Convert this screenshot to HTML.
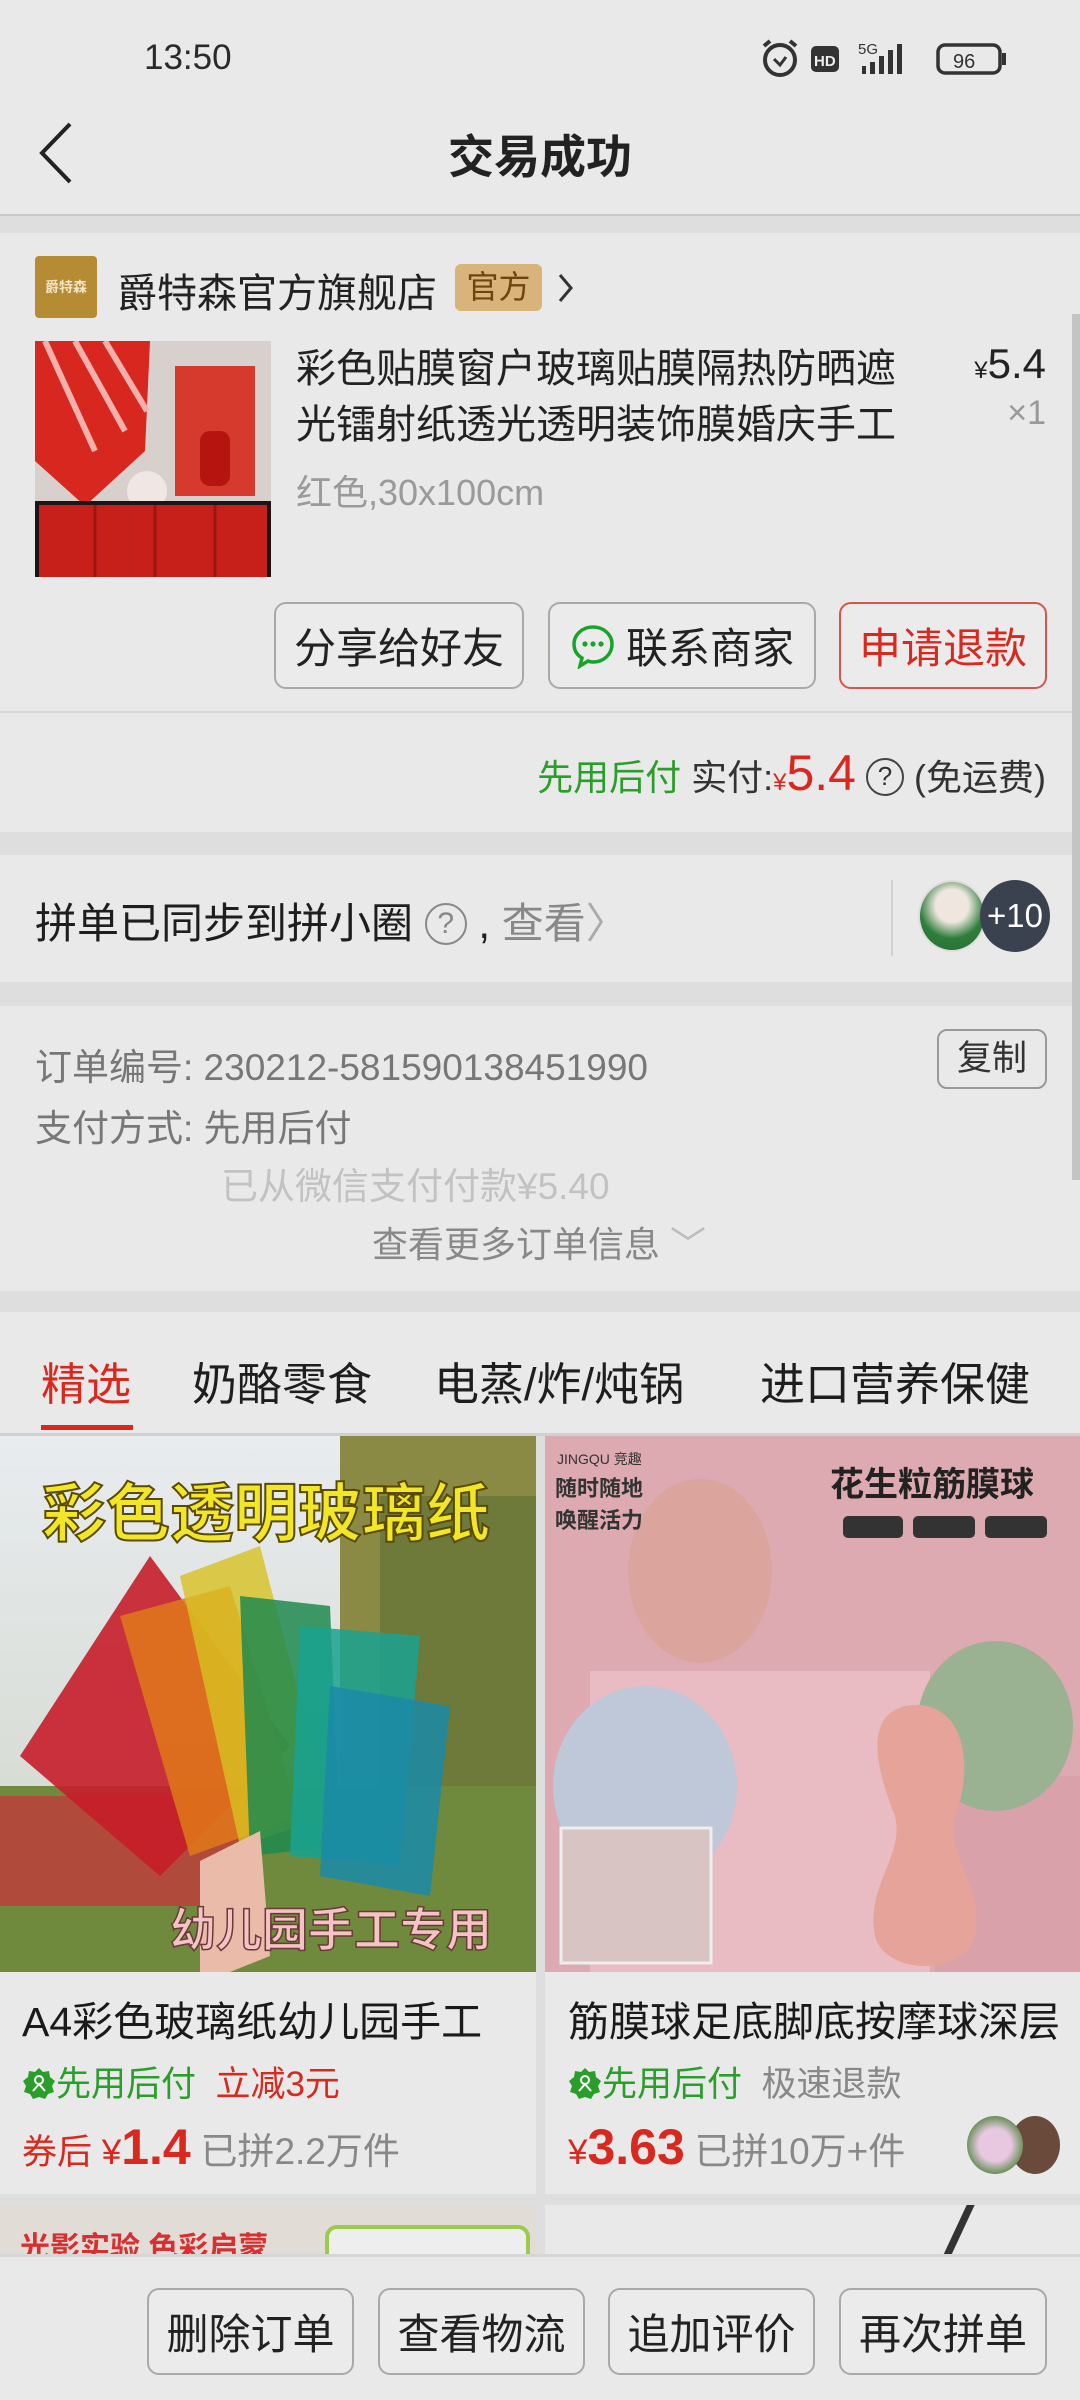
<!DOCTYPE html>
<html><head><meta charset="utf-8"><style>
*{margin:0;padding:0;box-sizing:border-box}
body{width:1080px;height:2400px;background:#dedede;font-family:"Liberation Sans","Noto Sans CJK SC",sans-serif;position:relative;overflow:hidden;color:#1e1e1e}
.a{position:absolute;white-space:nowrap}
.sec{position:absolute;left:0;width:1080px;background:#e9e9e9}
.btn{position:absolute;border:2px solid #a9a9a9;border-radius:12px;font-size:42px;display:flex;align-items:center;justify-content:center;color:#222;background:#ebebeb}
</style></head><body>
<div class="sec" style="top:0;height:216px;background:#e9e9e9;border-bottom:2px solid #c8c8c8"></div>
<div class="a" style="left:144px;top:38px;font-size:35px;color:#2a2a2a">13:50</div>
<svg class="a" style="left:758px;top:38px" width="250" height="42" viewBox="0 0 250 42">
<circle cx="22" cy="22" r="15" fill="none" stroke="#333" stroke-width="4"/><path d="M16 21 l6 6 l6 -8" fill="none" stroke="#333" stroke-width="3"/><path d="M6 8 l6 -5 M38 8 l-6 -5" stroke="#333" stroke-width="4"/>
<rect x="53" y="8" width="28" height="26" rx="5" fill="#333"/><text x="56" y="28" font-size="15" font-weight="bold" fill="#eee" font-family="Liberation Sans">HD</text>
<text x="100" y="16" font-size="15" fill="#333" font-family="Liberation Sans">5G</text>
<rect x="104" y="28" width="4" height="8" fill="#333"/><rect x="112" y="24" width="5" height="12" fill="#333"/><rect x="121" y="18" width="5" height="18" fill="#333"/><rect x="130" y="12" width="5" height="24" fill="#333"/><rect x="139" y="6" width="5" height="30" fill="#333"/>
<rect x="180" y="7" width="62" height="28" rx="7" fill="none" stroke="#333" stroke-width="3.5"/><rect x="244" y="15" width="4" height="12" fill="#333"/>
<text x="195" y="30" font-size="20" fill="#333" font-family="Liberation Sans">96</text>
</svg>
<svg class="a" style="left:36px;top:120px" width="40" height="66"><path d="M34 4 L6 33 L34 62" fill="none" stroke="#222" stroke-width="4"/></svg>
<div class="a" style="left:0;width:1080px;text-align:center;top:121px;font-size:46px;font-weight:bold;color:#222">交易成功</div>

<div class="sec" style="top:233px;height:599px"></div>
<div class="a" style="left:35px;top:256px;width:62px;height:62px;background:#b58c34;border-radius:4px;color:#f3e4c4;font-size:14px;font-weight:bold;display:flex;align-items:center;justify-content:center">爵特森</div>
<div class="a" style="left:117px;top:261px;font-size:40px;color:#222">爵特森官方旗舰店</div>
<div class="a" style="left:455px;top:264px;width:87px;height:47px;background:#d9b47a;border-radius:6px;font-size:32px;color:#6e4410;text-align:center;line-height:47px">官方</div>
<svg class="a" style="left:556px;top:272px" width="20" height="32"><path d="M4 3 L15 16 L4 29" fill="none" stroke="#333" stroke-width="3"/></svg>
<svg class="a" style="left:35px;top:341px" width="236" height="236" viewBox="0 0 236 236">
<rect width="236" height="236" fill="#d8d0cc"/>
<path d="M0 0 L115 0 L110 110 L50 165 L0 120Z" fill="#d8271e"/><path d="M10 0 L60 110 M40 0 L90 90 M70 0 L112 70" stroke="#f4b0aa" stroke-width="6"/>
<rect x="140" y="25" width="80" height="130" fill="#d63a2c"/><rect x="165" y="90" width="30" height="55" rx="10" fill="#b5140f"/>
<circle cx="112" cy="150" r="20" fill="#f0e6e4"/>
<rect x="0" y="160" width="236" height="76" fill="#1c1416"/><rect x="4" y="164" width="228" height="72" fill="#c7201a"/>
<path d="M60 164 V236 M120 164 V236 M180 164 V236" stroke="#9e1510" stroke-width="3"/>
</svg>
<div class="a" style="left:296px;top:341px;font-size:40px;line-height:56px;color:#222">彩色贴膜窗户玻璃贴膜隔热防晒遮<br>光镭射纸透光透明装饰膜婚庆手工</div>
<div class="a" style="right:34px;top:340px;font-size:42px;color:#222"><span style="font-size:24px">¥</span>5.4</div>
<div class="a" style="right:34px;top:394px;font-size:34px;color:#999">×1</div>
<div class="a" style="left:296px;top:464px;font-size:36px;color:#9a9a9a">红色,30x100cm</div>
<div class="btn" style="left:274px;top:602px;width:250px;height:87px">分享给好友</div>
<div class="btn" style="left:548px;top:602px;width:268px;height:87px"><svg width="46" height="46" viewBox="0 0 46 46" style="margin-right:10px"><path d="M23 4 C12 4 4 12 4 21 C4 27 7 32 12 35 L10 43 L18 38 C20 39 21 39 23 39 C34 39 42 31 42 21 C42 12 34 4 23 4Z" fill="none" stroke="#1aa32a" stroke-width="3.5"/><circle cx="15" cy="21" r="2.6" fill="#1aa32a"/><circle cx="23" cy="21" r="2.6" fill="#1aa32a"/><circle cx="31" cy="21" r="2.6" fill="#1aa32a"/></svg>联系商家</div>
<div class="btn" style="left:839px;top:602px;width:208px;height:87px;border-color:#d9534f;color:#d9281e">申请退款</div>
<div class="a" style="left:0;top:711px;width:1080px;height:2px;background:#d6d6d6"></div>
<div class="a" style="right:34px;top:744px;font-size:36px;color:#333"><span style="color:#2a9e2a">先用后付</span> 实付:<span style="color:#d9281e;font-size:24px">¥</span><span style="color:#d9281e;font-size:50px">5.4</span> <span style="display:inline-block;width:38px;height:38px;border:2.5px solid #444;border-radius:50%;font-size:26px;text-align:center;line-height:33px;vertical-align:5px">?</span> (免运费)</div>

<div class="sec" style="top:855px;height:127px"></div>
<div class="a" style="left:35px;top:890px;font-size:42px;color:#1e1e1e">拼单已同步到拼小圈 <span style="display:inline-block;width:42px;height:42px;border:2.5px solid #888;border-radius:50%;font-size:30px;color:#888;text-align:center;line-height:37px;vertical-align:5px">?</span> , <span style="color:#888">查看</span><span style="color:#aaa">〉</span></div>
<div class="a" style="left:891px;top:880px;width:2px;height:76px;background:#d0d0d0"></div>
<div class="a" style="left:918px;top:880px;width:68px;height:72px;border-radius:50%;background:radial-gradient(circle at 50% 35%,#efe6e0 30%,#2e7d3a 60%,#2a6a36);border:2px solid #ddd"></div>
<div class="a" style="left:980px;top:880px;width:70px;height:72px;border-radius:50%;background:#3a4250;color:#fff;font-size:33px;text-align:center;line-height:72px">+10</div>

<div class="sec" style="top:1006px;height:285px"></div>
<div class="a" style="left:35px;top:1037px;font-size:37px;color:#777">订单编号: 230212-581590138451990</div>
<div class="a" style="left:937px;top:1029px;width:110px;height:60px;border:2px solid #999;border-radius:10px;font-size:35px;text-align:center;line-height:56px;color:#333">复制</div>
<div class="a" style="left:35px;top:1098px;font-size:37px;color:#777">支付方式: 先用后付</div>
<div class="a" style="left:221px;top:1156px;font-size:37px;color:#c2c2c2">已从微信支付付款¥5.40</div>
<div class="a" style="left:372px;top:1216px;font-size:36px;color:#888">查看更多订单信息 <span style="color:#bbb">﹀</span></div>

<div class="sec" style="top:1312px;height:123px"></div>
<div class="a" style="left:41px;top:1348px;font-size:45px;color:#d9281e">精选</div>
<div class="a" style="left:192px;top:1348px;font-size:45px">奶酪零食</div>
<div class="a" style="left:434px;top:1348px;font-size:45px">电蒸/炸/炖锅</div>
<div class="a" style="left:760px;top:1348px;font-size:45px">进口营养保健</div>
<div class="a" style="left:41px;top:1425px;width:92px;height:5px;background:#d9281e"></div>
<div class="a" style="left:0;top:1433px;width:1080px;height:3px;background:#d0d0d0"></div>

<div class="a" style="left:0;top:1436px;width:536px;height:758px;background:#e9e9e9"></div>
<div class="a" style="left:545px;top:1436px;width:535px;height:758px;background:#e9e9e9"></div>
<svg class="a" style="left:0;top:1436px" width="536" height="536" viewBox="0 0 536 536">
<defs><linearGradient id="sky" x1="0" y1="0" x2="0" y2="1"><stop offset="0" stop-color="#e8ecef"/><stop offset="1" stop-color="#cfd4c8"/></linearGradient></defs>
<rect width="536" height="536" fill="url(#sky)"/>
<rect x="340" y="0" width="196" height="380" fill="#8a8a45"/><rect x="380" y="60" width="156" height="340" fill="#6d7a3a"/>
<rect x="0" y="350" width="536" height="186" fill="#6f8a3c"/><rect x="0" y="360" width="260" height="110" fill="#b04a3a"/>
<path d="M20 320 L150 120 L290 310 L160 440Z" fill="#c71d2a" opacity=".9"/>
<path d="M120 180 L230 150 L300 380 L190 420Z" fill="#e0781a" opacity=".85"/>
<path d="M180 140 L260 110 L330 380 L240 410Z" fill="#d8c020" opacity=".8"/>
<path d="M240 160 L330 170 L340 410 L250 420Z" fill="#1f8a4e" opacity=".85"/>
<path d="M300 190 L420 200 L400 430 L290 420Z" fill="#19a290" opacity=".85"/>
<path d="M330 250 L450 270 L430 460 L320 440Z" fill="#1a8aa8" opacity=".85"/>
<path d="M200 425 L260 395 L270 520 L230 536 L200 536Z" fill="#eabba8"/>
<text x="42" y="100" font-size="64" font-weight="bold" fill="#f2e629" stroke="#5a4a00" stroke-width="2" font-family="Noto Sans CJK SC">彩色透明玻璃纸</text>
<text x="170" y="510" font-size="46" font-weight="bold" fill="#f4c4c4" stroke="#6a3a3a" stroke-width="1.5" font-family="Noto Sans CJK SC">幼儿园手工专用</text>
</svg>
<svg class="a" style="left:545px;top:1436px" width="535" height="536" viewBox="0 0 535 536">
<rect width="535" height="536" fill="#dcaab0"/>
<rect x="45" y="235" width="340" height="301" fill="#e8bcc2"/><rect x="390" y="340" width="145" height="196" fill="#d9a2aa"/>
<ellipse cx="155" cy="135" rx="72" ry="92" fill="#dba49c"/>
<ellipse cx="450" cy="290" rx="78" ry="85" fill="#9ab292"/>
<ellipse cx="100" cy="350" rx="92" ry="100" fill="#bec8d8"/>
<path d="M360 270 C420 260 430 330 410 380 C400 420 440 450 430 500 C420 540 340 540 330 500 C320 450 360 420 350 380 C330 330 320 280 360 270Z" fill="#e5a39a"/>
<rect x="16" y="392" width="150" height="135" fill="#d8c4c2" stroke="#eee" stroke-width="3"/>
<text x="12" y="28" font-size="14" fill="#333" font-family="Liberation Sans">JINGQU 竞趣</text>
<text x="10" y="60" font-size="22" font-weight="bold" fill="#333" font-family="Noto Sans CJK SC">随时随地</text>
<text x="10" y="92" font-size="22" font-weight="bold" fill="#333" font-family="Noto Sans CJK SC">唤醒活力</text>
<text x="285" y="60" font-size="34" font-weight="bold" fill="#222" font-family="Noto Sans CJK SC">花生粒筋膜球</text>
<rect x="298" y="80" width="60" height="22" rx="5" fill="#333"/><rect x="368" y="80" width="62" height="22" rx="5" fill="#333"/><rect x="440" y="80" width="62" height="22" rx="5" fill="#333"/>
</svg>
<div class="a" style="left:22px;top:1988px;font-size:41px;color:#1a1a1a">A4彩色玻璃纸幼儿园手工</div>
<div class="a" style="left:568px;top:1988px;font-size:41px;color:#1a1a1a">筋膜球足底脚底按摩球深层</div>
<div class="a" style="left:22px;top:2056px;font-size:35px;color:#2a9e2a"><svg width="34" height="34" viewBox="0 0 34 34" style="vertical-align:-5px"><path d="M17 1 L21 5 L27 4 L28 10 L33 14 L30 19 L32 25 L26 27 L23 32 L17 30 L11 32 L8 27 L2 25 L4 19 L1 14 L6 10 L7 4 L13 5Z" fill="#2a9e2a"/><circle cx="17" cy="13" r="4" fill="none" stroke="#fff" stroke-width="2"/><path d="M11 24 L17 17 L23 24" fill="none" stroke="#fff" stroke-width="2"/></svg>先用后付 <span style="color:#d9281e">&nbsp;立减3元</span></div>
<div class="a" style="left:568px;top:2056px;font-size:35px;color:#2a9e2a"><svg width="34" height="34" viewBox="0 0 34 34" style="vertical-align:-5px"><path d="M17 1 L21 5 L27 4 L28 10 L33 14 L30 19 L32 25 L26 27 L23 32 L17 30 L11 32 L8 27 L2 25 L4 19 L1 14 L6 10 L7 4 L13 5Z" fill="#2a9e2a"/><circle cx="17" cy="13" r="4" fill="none" stroke="#fff" stroke-width="2"/><path d="M11 24 L17 17 L23 24" fill="none" stroke="#fff" stroke-width="2"/></svg>先用后付 <span style="color:#888">&nbsp;极速退款</span></div>
<div class="a" style="left:22px;top:2118px;font-size:35px;color:#d9281e">券后 ¥<span style="font-size:50px;font-weight:bold">1.4</span> <span style="color:#888;font-size:37px">已拼2.2万件</span></div>
<div class="a" style="left:568px;top:2118px;font-size:35px;color:#d9281e">¥<span style="font-size:50px;font-weight:bold">3.63</span> <span style="color:#888;font-size:37px">已拼10万+件</span></div>
<div class="a" style="left:1010px;top:2116px;width:50px;height:58px;border-radius:50%;background:#6a4a3a"></div>
<div class="a" style="left:967px;top:2116px;width:56px;height:58px;border-radius:50%;background:radial-gradient(circle,#e8c8e0 40%,#5a8a4a 75%)"></div>
<div class="a" style="left:0;top:2205px;width:536px;height:50px;background:#e2dcd6;overflow:hidden"><div style="position:absolute;left:20px;top:18px;font-size:30px;font-weight:bold;color:#d83030">光影实验 色彩启蒙</div><div style="position:absolute;left:325px;top:20px;width:205px;height:40px;border:4px solid #9acb4a;border-radius:12px;background:#eee"></div></div>
<div class="a" style="left:545px;top:2205px;width:535px;height:50px;background:#e9e9e9"><div style="position:absolute;left:410px;top:0;width:8px;height:50px;background:#333;transform:skewX(-25deg)"></div></div>
<div class="a" style="left:1072px;top:314px;width:8px;height:866px;background:#c4c4c4"></div>

<div class="sec" style="top:2254px;height:146px;border-top:3px solid #d6d6d6;background:#e9e9e9"></div>
<div class="btn" style="left:147px;top:2288px;width:207px;height:87px">删除订单</div>
<div class="btn" style="left:378px;top:2288px;width:207px;height:87px">查看物流</div>
<div class="btn" style="left:608px;top:2288px;width:207px;height:87px">追加评价</div>
<div class="btn" style="left:839px;top:2288px;width:208px;height:87px">再次拼单</div>
</body></html>
